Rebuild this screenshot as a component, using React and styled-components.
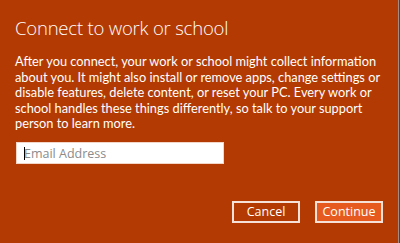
import React, { useState } from 'react';
import styled, { createGlobalStyle } from 'styled-components';

const GlobalStyle = createGlobalStyle`
  html, body {
    margin: 0;
    padding: 0;
    background: #b33a02;
  }
`

const Dialog = styled.div`
  box-sizing: border-box;
  width: 400px;
  height: 243px;
  background: #b33a02;
  border-right: 1px solid #8d2d00;
  box-shadow: inset -1px 0 0 #a58b82;
  padding: 16px 0 0 15px;
  display: flex;
  flex-direction: column;
  font-family: 'Lato', 'Open Sans', sans-serif;
  color: #fff;
`

const Title = styled.h1`
  margin: 0;
  font-family: 'Open Sans', sans-serif;
  font-size: 18.5px;
  font-weight: 300;
  line-height: 24px;
  letter-spacing: -0.2px;
`

const Body = styled.p`
  margin: 14px 0 0;
  font-size: 12.8px;
  line-height: 15.5px;
  white-space: nowrap;
`

const FieldWrap = styled.div`
  position: relative;
  margin: 10px 0 0 1px;
  width: 208px;
  height: 22px;
`

const Field = styled.input`
  box-sizing: border-box;
  width: 100%;
  height: 100%;
  border: 1px solid #f3d6c8;
  outline: none;
  padding: 0 7px;
  font-family: 'Open Sans', sans-serif;
  font-size: 12.5px;
  color: #222;
  caret-color: transparent;

  &::placeholder {
    color: #8b8b8b;
  }
`

const Caret = styled.span`
  position: absolute;
  left: 8px;
  top: 5px;
  width: 1px;
  height: 13px;
  background: #000;
  pointer-events: none;
`

const Actions = styled.div`
  display: flex;
  justify-content: flex-end;
  gap: 15px;
  margin-top: 37px;
  padding-right: 16px;
`

const Button = styled.button`
  box-sizing: border-box;
  width: 68px;
  height: 22px;
  border: 2px solid #f6e2d8;
  background: ${props => props.primary ? '#e65a1f' : '#b33a02'};
  color: #fff;
  font-family: 'Open Sans', sans-serif;
  font-size: 12.5px;
  padding: 0;
  cursor: pointer;
`

const App = () => {
  const [email, setEmail] = useState('')

  return <>
    <GlobalStyle />
    <Dialog>
      <Title>Connect to work or school</Title>
      <Body>
        After you connect, your work or school might collect information<br />
        about you. It might also install or remove apps, change settings or<br />
        disable features, delete content, or reset your PC. Every work or<br />
        school handles these things differently, so talk to your support<br />
        person to learn more.
      </Body>
      <FieldWrap>
        <Field
          value={email}
          onChange={e => setEmail(e.target.value)}
          placeholder='Email Address'
        />
        {email === '' && <Caret />}
      </FieldWrap>
      <Actions>
        <Button>Cancel</Button>
        <Button primary>Continue</Button>
      </Actions>
    </Dialog>
  </>
}

export default App;
